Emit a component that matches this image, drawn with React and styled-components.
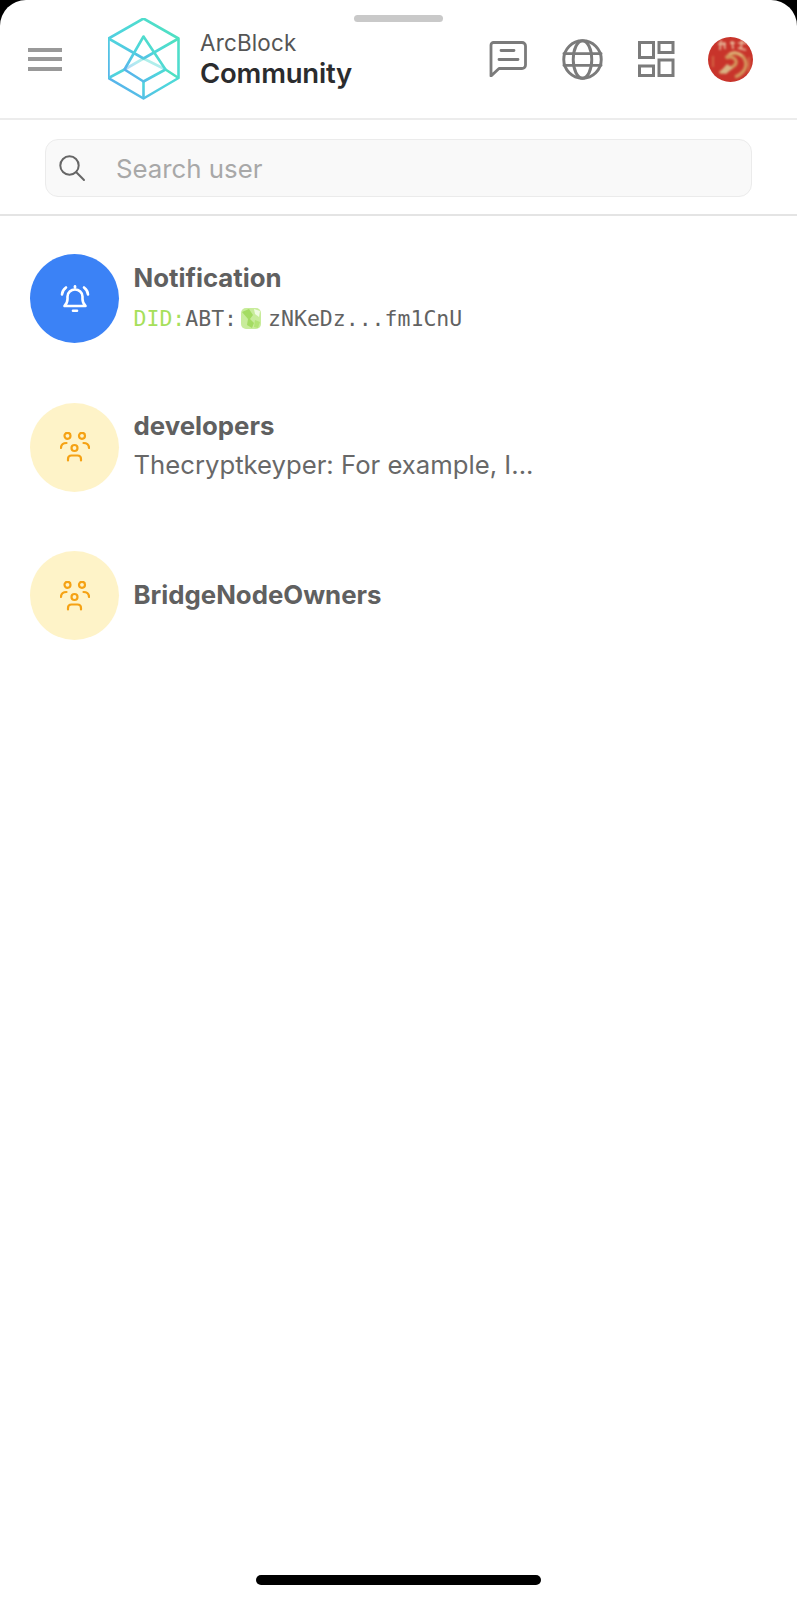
import React from "react";
import styled, { createGlobalStyle } from "styled-components";

const GlobalStyle = createGlobalStyle`
  html, body {
    margin: 0;
    padding: 0;
    background: #000;
  }
`;

const Screen = styled.div`
  position: relative;
  width: 797px;
  height: 1600px;
  overflow: hidden;
  background: #fff;
  border-radius: 26px 26px 0 0;
  font-family: Inter, "Liberation Sans", sans-serif;
`;
const GrabHandle = styled.div`
  position: absolute;
  top: 15px;
  left: 354px;
  width: 89px;
  height: 7px;
  border-radius: 4px;
  background: #c9c9c9;
`;
const HomeIndicator = styled.div`
  position: absolute;
  top: 1575px;
  left: 256px;
  width: 285px;
  height: 10px;
  border-radius: 5px;
  background: #000;
`;
const Header = styled.header`
  display: flex;
  align-items: center;
  height: 120px;
  padding: 0 44px 0 28px;
  box-sizing: border-box;
  border-bottom: 2px solid #ececec;
`;
const Burger = styled.div`
  display: flex;
  flex-direction: column;
  gap: 5.5px;
  width: 34px;
  margin-right: 46px;
  span {
    height: 4px;
    background: #999;
  }
`;
const Brand = styled.div`
  display: flex;
  align-items: center;
  gap: 20px;
  flex: 1;
`;
const BrandText = styled.div`
  display: flex;
  flex-direction: column;
  gap: 2px;
  color: #2b2c2e;
`;
const BrandTop = styled.span`
  font-size: 22.4px;
  line-height: 25px;
  color: #555;
  letter-spacing: 0.2px;
`;
const BrandName = styled.span`
  font-size: 27.5px;
  line-height: 32px;
  font-weight: 600;
  letter-spacing: -0.2px;
`;
const HeaderIcons = styled.div`
  display: flex;
  align-items: center;
  gap: 35px;
`;
const IconSvg = styled.svg`
  display: block;
  fill: none;
  stroke: ${p => p.$color || "#7b7b7b"};
  stroke-width: ${p => p.$weight || 2};
  stroke-linecap: ${p => (p.$square ? "butt" : "round")};
  stroke-linejoin: ${p => (p.$square ? "miter" : "round")};
`;
const LogoSvg = styled.svg`
  display: block;
  flex: none;
`;
const PhotoSvg = styled.svg`
  display: block;
  margin-left: -2px;
`;
const SearchRow = styled.div`
  padding: 19px 45px 17px;
  border-bottom: 2px solid #e4e4e4;
`;
const SearchBox = styled.div`
  display: flex;
  align-items: center;
  height: 58px;
  box-sizing: border-box;
  padding: 0 12px;
  gap: 30px;
  background: #f9f9f9;
  border: 1px solid #ebebeb;
  border-radius: 13px;
`;
const Placeholder = styled.span`
  font-size: 25.8px;
  color: #a8a8a8;
`;
const List = styled.div`
  display: flex;
  flex-direction: column;
  gap: 59.5px;
  padding: 38px 30px 0;
`;
const Row = styled.div`
  display: flex;
  align-items: center;
  gap: 14.5px;
  height: 89px;
`;
const Avatar = styled.div`
  display: flex;
  align-items: center;
  justify-content: center;
  flex: none;
  width: 89px;
  height: 89px;
  border-radius: 50%;
  background: ${p => p.$bg};
`;
const RowText = styled.div`
  display: flex;
  flex-direction: column;
  gap: 6px;
  margin-top: -2px;
`;
const Title = styled.div`
  font-size: 25.8px;
  line-height: 32px;
  font-weight: 700;
  color: #606060;
`;
const Subtitle = styled.div`
  font-size: 25.7px;
  line-height: 34px;
  color: #686868;
`;
const Did = styled.div`
  display: flex;
  align-items: center;
  margin-top: 4px;
  font-family: "DejaVu Sans Mono", "Liberation Mono", monospace;
  font-size: 21.5px;
  line-height: 30px;
  color: #626262;
`;
const DidPrefix = styled.span`
  color: #a6e05a;
`;
const DidIcon = styled.svg`
  display: block;
  margin: 0 7px 0 4px;
`;

const ArcBlockLogo = () => (
  <LogoSvg width="72" height="82" viewBox="0 0 72 82">
    <defs>
      <linearGradient id="arc" x1="0" y1="1" x2="1" y2="0">
        <stop offset="0" stopColor="#5aa8f0" />
        <stop offset="0.5" stopColor="#4fd6dc" />
        <stop offset="1" stopColor="#4fe3bb" />
      </linearGradient>
    </defs>
    <g stroke="url(#arc)" strokeWidth="2.6" fill="none" strokeLinejoin="round">
      <path d="M35.5 .5 L70.5 20.5 V60 L35.5 80.5 L.5 60 V20.5 Z" />
      <path d="M.5 20.5 L35.5 40.5 L70.5 20.5" />
      <path d="M35.5 63.5 V80.5 M.5 60 L16.5 51.5 M70.5 60 L57.5 51.5" />
      <path d="M35.5 18.5 L57.5 51.5 L35.5 63.5 L16.5 51.5 Z" />
      <path d="M35.5 .5 V40.5" opacity="0.55" />
      <path d="M16.5 51.5 L35.5 40.5 L57.5 51.5" opacity="0.45" />
    </g>
  </LogoSvg>
);

const ChatIcon = () => (
  <IconSvg width="38" height="36" viewBox="0 0 38 36" $weight={2.8}>
    <path d="M4.5 1.5 H33 a3.5 3.5 0 0 1 3.5 3.5 V24 a3.5 3.5 0 0 1 -3.5 3.5 H10 L2 35 V4 a2.5 2.5 0 0 1 2.5 -2.5 Z" />
    <path d="M12 9.5 H25 M10 18.5 H29" />
  </IconSvg>
);

const GlobeIcon = () => (
  <IconSvg width="41" height="41" viewBox="0 0 42 42" $weight={3}>
    <circle cx="21" cy="21" r="19.2" />
    <ellipse cx="21" cy="21" rx="9.5" ry="19.2" />
    <path d="M2 15 H40 M2 27 H40" />
  </IconSvg>
);

const AppsIcon = () => (
  <IconSvg width="37" height="37" viewBox="0 0 37 37" $weight={3} $square>
    <rect x="1.5" y="1.5" width="14" height="15" />
    <rect x="21" y="1.5" width="14" height="10" />
    <rect x="1.5" y="25" width="14" height="9.5" />
    <rect x="21" y="19" width="14" height="15.5" />
  </IconSvg>
);

const UserPhoto = () => (
  <PhotoSvg width="45" height="45" viewBox="0 0 45 45">
    <defs>
      <clipPath id="photo">
        <circle cx="22.5" cy="22.5" r="22.5" />
      </clipPath>
      <filter id="soft">
        <feGaussianBlur stdDeviation="0.8" />
      </filter>
    </defs>
    <g clipPath="url(#photo)">
      <rect width="45" height="45" fill="#c8342b" />
      <g filter="url(#soft)">
        <path d="M12 36 C17 31 22 33 27 28 C31 23 24 18 18 21 C24 13 37 16 38 27 C38 33 33 38 27 40" fill="none" stroke="#d6a463" strokeWidth="3.4" opacity="0.85" />
        <path d="M11 36 L19 27 L25 31 L18 37 Z" fill="#d9b283" />
        <path d="M21 17 C26 14 31 15 34 19" fill="none" stroke="#e2bd82" strokeWidth="2" />
        <path d="M10 7 H18 M13 3 L12 13 M16 5 L17 12 M22 6 H27 M24 4 L25 12 M30 6 H39 M34 3 L33 12 M30 11 L38 13" stroke="#f0d9b5" strokeWidth="1.5" opacity="0.9" />
        <path d="M41 20 V36 M5 19 V30" stroke="#e0955f" strokeWidth="1.4" opacity="0.7" />
      </g>
    </g>
  </PhotoSvg>
);

const SearchIcon = () => (
  <IconSvg width="28" height="28" viewBox="0 0 28 28" $color="#666" $weight={2}>
    <circle cx="11.5" cy="11.5" r="9.2" />
    <path d="M18.3 18.3 L26 26" />
  </IconSvg>
);

const BellIcon = () => (
  <IconSvg width="30" height="30" viewBox="0 0 30 30" $color="#fff" $weight={2.6}>
    <path d="M4.5 22 H25.5 C23.5 20 22.5 18 22.5 15 V12.5 C22.5 8.5 19 5.5 15 5.5 C11 5.5 7.5 8.5 7.5 12.5 V15 C7.5 18 6.5 20 4.5 22 Z" />
    <path d="M13 26.8 H17" />
    <path d="M15 2.2 V3.4" />
    <path d="M6 3.5 C3.5 5.5 2 8 2 10.5" />
    <path d="M24 3.5 C26.5 5.5 28 8 28 10.5" />
  </IconSvg>
);

const GroupIcon = () => (
  <IconSvg width="30" height="30" viewBox="0 0 30 30" $color="#f5a214" $weight={2.2}>
    <circle cx="7.5" cy="3.8" r="3" />
    <circle cx="22" cy="3.8" r="3" />
    <circle cx="14.5" cy="16" r="3" />
    <path d="M1 16 C1 12.5 3 11 6.5 11" />
    <path d="M29 16 C29 12.5 27 11 23.5 11" />
    <path d="M8 28.5 V27 C8 24.5 9.5 23.5 11.5 23.5 H17.5 C19.5 23.5 21 24.5 21 27 V28.5" />
  </IconSvg>
);

const DidTile = () => (
  <DidIcon width="20" height="21" viewBox="0 0 20 21">
    <rect width="20" height="21" rx="5" fill="#c8ec9b" />
    <path d="M1 4 L8 1 L12 7 L9 11 L13 15 L11 20 L6 17 L7 11 Z" fill="#a4dc62" />
    <path d="M13 1 L19 3 L18 9 L14 6 Z" fill="#f0fbe2" />
    <path d="M14 12 L19 14 L17 20 L13 19 Z" fill="#b2e474" />
  </DidIcon>
);

export default function App() {
  return (
    <>
      <GlobalStyle />
      <Screen>
        <GrabHandle />
        <Header>
          <Burger>
            <span />
            <span />
            <span />
          </Burger>
          <Brand>
            <ArcBlockLogo />
            <BrandText>
              <BrandTop>ArcBlock</BrandTop>
              <BrandName>Community</BrandName>
            </BrandText>
          </Brand>
          <HeaderIcons>
            <ChatIcon />
            <GlobeIcon />
            <AppsIcon />
            <UserPhoto />
          </HeaderIcons>
        </Header>
        <SearchRow>
          <SearchBox>
            <SearchIcon />
            <Placeholder>Search user</Placeholder>
          </SearchBox>
        </SearchRow>
        <List>
          <Row>
            <Avatar $bg="#3b82f6">
              <BellIcon />
            </Avatar>
            <RowText>
              <Title>Notification</Title>
              <Did>
                <DidPrefix>DID:</DidPrefix>ABT:
                <DidTile />
                zNKeDz...fm1CnU
              </Did>
            </RowText>
          </Row>
          <Row>
            <Avatar $bg="#fef3c8">
              <GroupIcon />
            </Avatar>
            <RowText>
              <Title>developers</Title>
              <Subtitle>Thecryptkeyper: For example, I...</Subtitle>
            </RowText>
          </Row>
          <Row>
            <Avatar $bg="#fef3c8">
              <GroupIcon />
            </Avatar>
            <RowText>
              <Title>BridgeNodeOwners</Title>
            </RowText>
          </Row>
        </List>
        <HomeIndicator />
      </Screen>
    </>
  );
}
